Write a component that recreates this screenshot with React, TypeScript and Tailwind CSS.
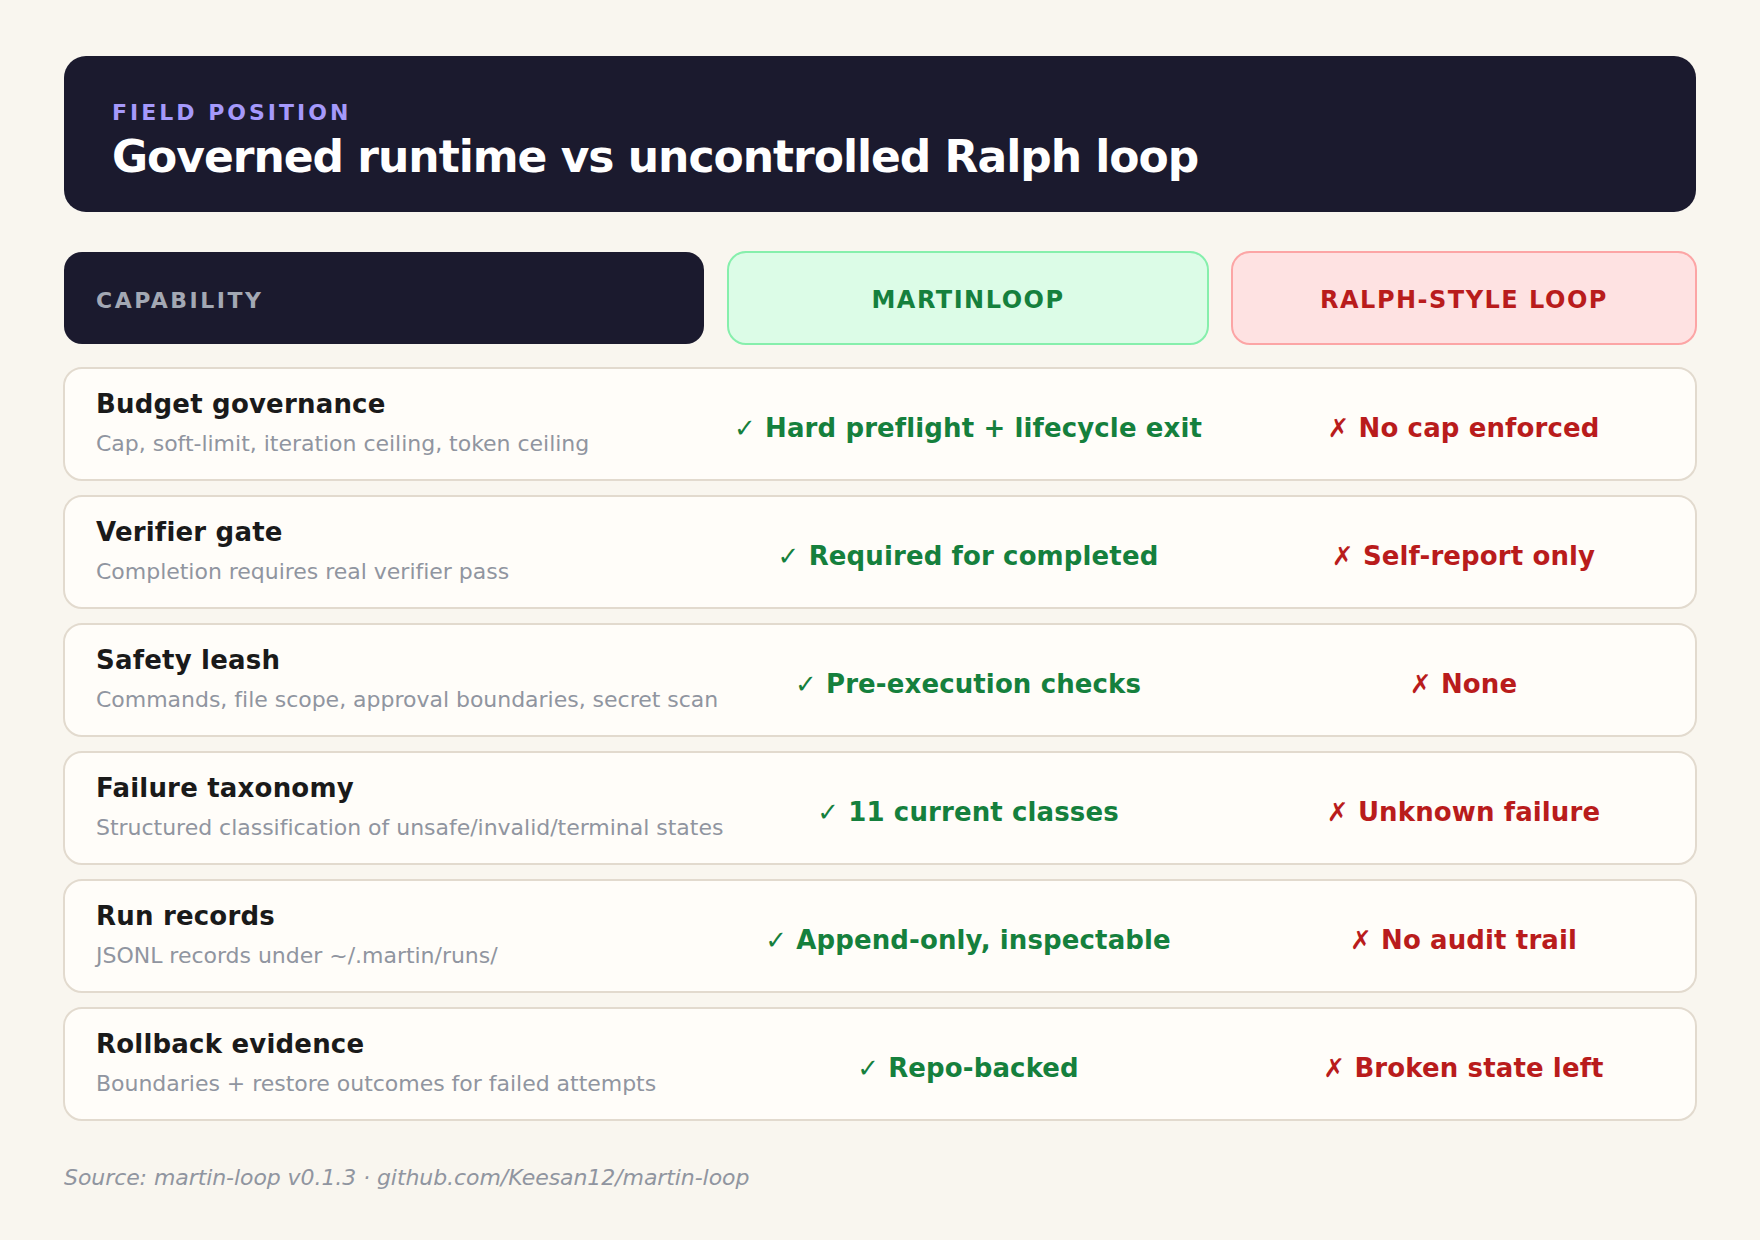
const ROWS = [
  { name: 'Budget governance', sub: 'Cap, soft-limit, iteration ceiling, token ceiling', yes: 'Hard preflight + lifecycle exit', no: 'No cap enforced' },
  { name: 'Verifier gate', sub: 'Completion requires real verifier pass', yes: 'Required for completed', no: 'Self-report only' },
  { name: 'Safety leash', sub: 'Commands, file scope, approval boundaries, secret scan', yes: 'Pre-execution checks', no: 'None' },
  { name: 'Failure taxonomy', sub: 'Structured classification of unsafe/invalid/terminal states', yes: '11 current classes', no: 'Unknown failure' },
  { name: 'Run records', sub: 'JSONL records under ~/.martin/runs/', yes: 'Append-only, inspectable', no: 'No audit trail' },
  { name: 'Rollback evidence', sub: 'Boundaries + restore outcomes for failed attempts', yes: 'Repo-backed', no: 'Broken state left' },
];

export default function App() {
  return (
    <div className="min-h-[1240px] bg-[#f9f6ef] px-16 pt-14 font-['DejaVu_Sans',sans-serif]">
      <div className="h-[156px] rounded-[22px] bg-[#1b1a2e] px-12 pt-[45px]">
        <div className="text-[22px] leading-6 font-bold tracking-[3px] text-[#a599fb]">FIELD POSITION</div>
        <h1 className="mt-[7px] text-[44px] leading-[50px] font-bold tracking-[-1.02px] text-white">Governed runtime vs uncontrolled Ralph loop</h1>
      </div>

      <div className="mt-10 grid grid-cols-[640px_480px_464px] grid-rows-[92px] gap-6">
        <div className="flex items-center rounded-[18px] bg-[#1b1a2e] px-8 pt-1 text-[22px] font-bold tracking-[2.5px] text-[#a3a8b4]">
          CAPABILITY
        </div>
        <div className="-m-px flex items-center justify-center rounded-[19px] border-2 border-[#86efac] bg-[#dcfce7] pt-1 text-[24px] font-bold tracking-[1.5px] text-[#15803d]">
          MARTINLOOP
        </div>
        <div className="-m-px flex items-center justify-center rounded-[19px] border-2 border-[#fca5a5] bg-[#fee2e2] pt-1 text-[24px] font-bold tracking-[1.5px] text-[#b91c1c]">
          RALPH-STYLE LOOP
        </div>
      </div>

      <div className="-mx-px mt-[23px] flex flex-col gap-[14px]">
        {ROWS.map((row) => (
          <div
            key={row.name}
            className="grid h-[114px] grid-cols-[639px_480px_463px] items-center gap-6 rounded-[19px] border-2 border-[#e2dace] bg-[#fffdf9]"
          >
            <div className="pb-[3px] pl-[31px] whitespace-nowrap">
              <div className="text-[26px] leading-8 font-bold tracking-[0.2px] text-[#1a1a1a]">{row.name}</div>
              <div className="mt-2.5 text-[22px] leading-7 tracking-[-0.02px] text-[#9095a0]">{row.sub}</div>
            </div>
            <div className="pt-[9px] text-center text-[26px] font-bold tracking-[0.12px] whitespace-nowrap text-[#15803d]">✓ {row.yes}</div>
            <div className="pt-[9px] text-center text-[26px] font-bold tracking-[0.12px] whitespace-nowrap text-[#b91c1c]">✗ {row.no}</div>
          </div>
        ))}
      </div>

      <div className="mt-[40px] text-[22px] tracking-[-0.07px] text-[#9095a0] italic">Source: martin-loop v0.1.3 · github.com/Keesan12/martin-loop</div>
    </div>
  );
}
